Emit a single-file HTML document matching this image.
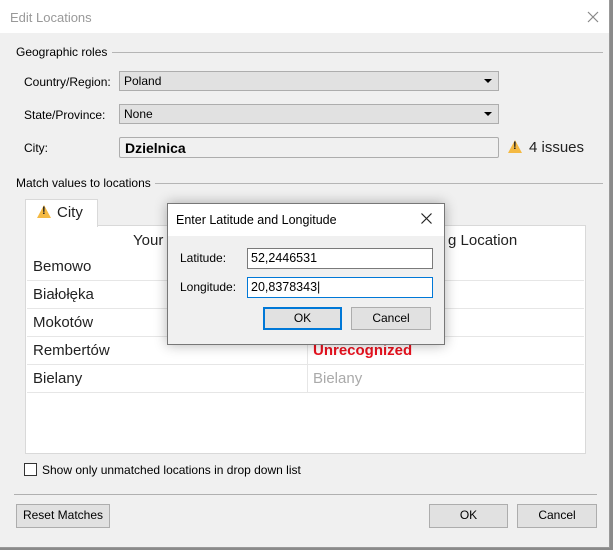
<!DOCTYPE html>
<html><head><meta charset="utf-8"><style>
*{box-sizing:border-box;margin:0;padding:0}
body{width:613px;height:550px;background:#8a8a8a;position:relative;overflow:hidden;font-family:"Liberation Sans",sans-serif;font-size:12px;color:#000}
.a{position:absolute;white-space:nowrap}
.combo{position:absolute;background:#e1e1e1;border:1px solid #adadad;padding:2px 4px;font-size:12px}
.combo:after{content:"";position:absolute;right:6px;top:7px;border-left:4px solid transparent;border-right:4px solid transparent;border-top:4px solid #000}
.btn{position:absolute;background:#e1e1e1;border:1px solid #adadad;text-align:center;font-size:12px;line-height:21px}
.row{position:absolute;left:27px;width:557px;height:28px;border-bottom:1px solid #e6e6e6;font-size:15px;line-height:28px}
.row span{position:absolute;left:6px;color:#222}
.row i{position:absolute;left:280px;top:0;bottom:0;border-left:1px solid #e6e6e6}
.row b{position:absolute;left:286px;font-weight:normal}
.warn{position:absolute;width:0;height:0;border-left:7px solid transparent;border-right:7px solid transparent;border-bottom:13px solid #f4b942}
.warn:after{content:"!";position:absolute;left:-2px;top:0px;font-size:11px;font-weight:bold;color:#222}
</style></head><body>
<div class="a" style="left:0;top:0;width:610px;height:548px;background:#f0f0f0;border-right:1px solid #999;border-bottom:1px solid #999"></div>
<div class="a" style="left:0;top:0;width:609px;height:33px;background:#fff"></div>
<div class="a" style="left:10px;top:10px;color:#999;font-size:13px">Edit Locations</div>
<svg class="a" style="left:587px;top:11px" width="12" height="12"><path d="M1 1L11 11M11 1L1 11" stroke="#888" stroke-width="1.2"/></svg>

<div class="a" style="left:16px;top:45px;font-size:12px">Geographic roles</div>
<div class="a" style="left:112px;top:52px;width:491px;border-top:1px solid #b5b5b5"></div>
<div class="a" style="left:24px;top:75px">Country/Region:</div>
<div class="combo" style="left:119px;top:71px;width:380px;height:20px">Poland</div>
<div class="a" style="left:24px;top:108px">State/Province:</div>
<div class="combo" style="left:119px;top:104px;width:380px;height:20px">None</div>
<div class="a" style="left:24px;top:141px">City:</div>
<div class="a" style="left:119px;top:137px;width:380px;height:21px;border:1px solid #adadad;border-radius:2px;font-weight:bold;font-size:14px;padding:2px 5px">Dzielnica</div>
<div class="warn" style="left:508px;top:140px"></div>
<div class="a" style="left:529px;top:139px;font-size:15px;color:#222">4 issues</div>

<div class="a" style="left:16px;top:176px">Match values to locations</div>
<div class="a" style="left:155px;top:183px;width:448px;border-top:1px solid #b5b5b5"></div>

<div class="a" style="left:25px;top:225px;width:561px;height:229px;background:#fff;border:1px solid #d9d9d9"></div>
<div class="a" style="left:25px;top:199px;width:73px;height:28px;background:#fff;border:1px solid #d9d9d9;border-bottom:none"></div>
<div class="warn" style="left:37px;top:205px"></div>
<div class="a" style="left:57px;top:204px;font-size:15px;color:#222">City</div>
<div class="a" style="left:133px;top:232px;font-size:15px;color:#222">Your</div>
<div class="a" style="left:448px;top:232px;font-size:15px;color:#222">g Location</div>
<div class="row" style="top:253px"><span>Bemowo</span><i></i></div>
<div class="row" style="top:281px"><span>Białołęka</span><i></i></div>
<div class="row" style="top:309px"><span>Mokotów</span><i></i></div>
<div class="row" style="top:337px"><span>Rembertów</span><i></i><b style="color:#e8111e;font-weight:bold">Unrecognized</b></div>
<div class="row" style="top:365px"><span>Bielany</span><i></i><b style="color:#aaa">Bielany</b></div>

<div class="a" style="left:24px;top:463px;width:13px;height:13px;border:1px solid #333;background:#fff"></div>
<div class="a" style="left:42px;top:463px">Show only unmatched locations in drop down list</div>
<div class="a" style="left:14px;top:494px;width:583px;border-top:1px solid #b0b0b0"></div>
<div class="btn" style="left:16px;top:504px;width:94px;height:24px">Reset Matches</div>
<div class="btn" style="left:429px;top:504px;width:79px;height:24px">OK</div>
<div class="btn" style="left:517px;top:504px;width:80px;height:24px">Cancel</div>

<div class="a" style="left:167px;top:203px;width:278px;height:142px;background:#f0f0f0;border:1px solid #777;box-shadow:0 0 12px rgba(0,0,0,.3)"></div>
<div class="a" style="left:168px;top:204px;width:276px;height:32px;background:#fff"></div>
<div class="a" style="left:176px;top:213px;font-size:12.5px">Enter Latitude and Longitude</div>
<svg class="a" style="left:421px;top:213px" width="11" height="11"><path d="M0.5 0.5L10.5 10.5M10.5 0.5L0.5 10.5" stroke="#222" stroke-width="1.2"/></svg>
<div class="a" style="left:180px;top:251px">Latitude:</div>
<div class="a" style="left:247px;top:248px;width:186px;height:21px;background:#fff;border:1px solid #7a7a7a;padding:2px 3px;font-size:12.5px">52,2446531</div>
<div class="a" style="left:180px;top:280px">Longitude:</div>
<div class="a" style="left:247px;top:277px;width:186px;height:21px;background:#fff;border:1px solid #0078d7;padding:2px 3px;font-size:12.5px">20,8378343|</div>
<div class="btn" style="left:263px;top:307px;width:79px;height:23px;border:2px solid #0078d7;line-height:19px">OK</div>
<div class="btn" style="left:351px;top:307px;width:80px;height:23px">Cancel</div>
</body></html>
